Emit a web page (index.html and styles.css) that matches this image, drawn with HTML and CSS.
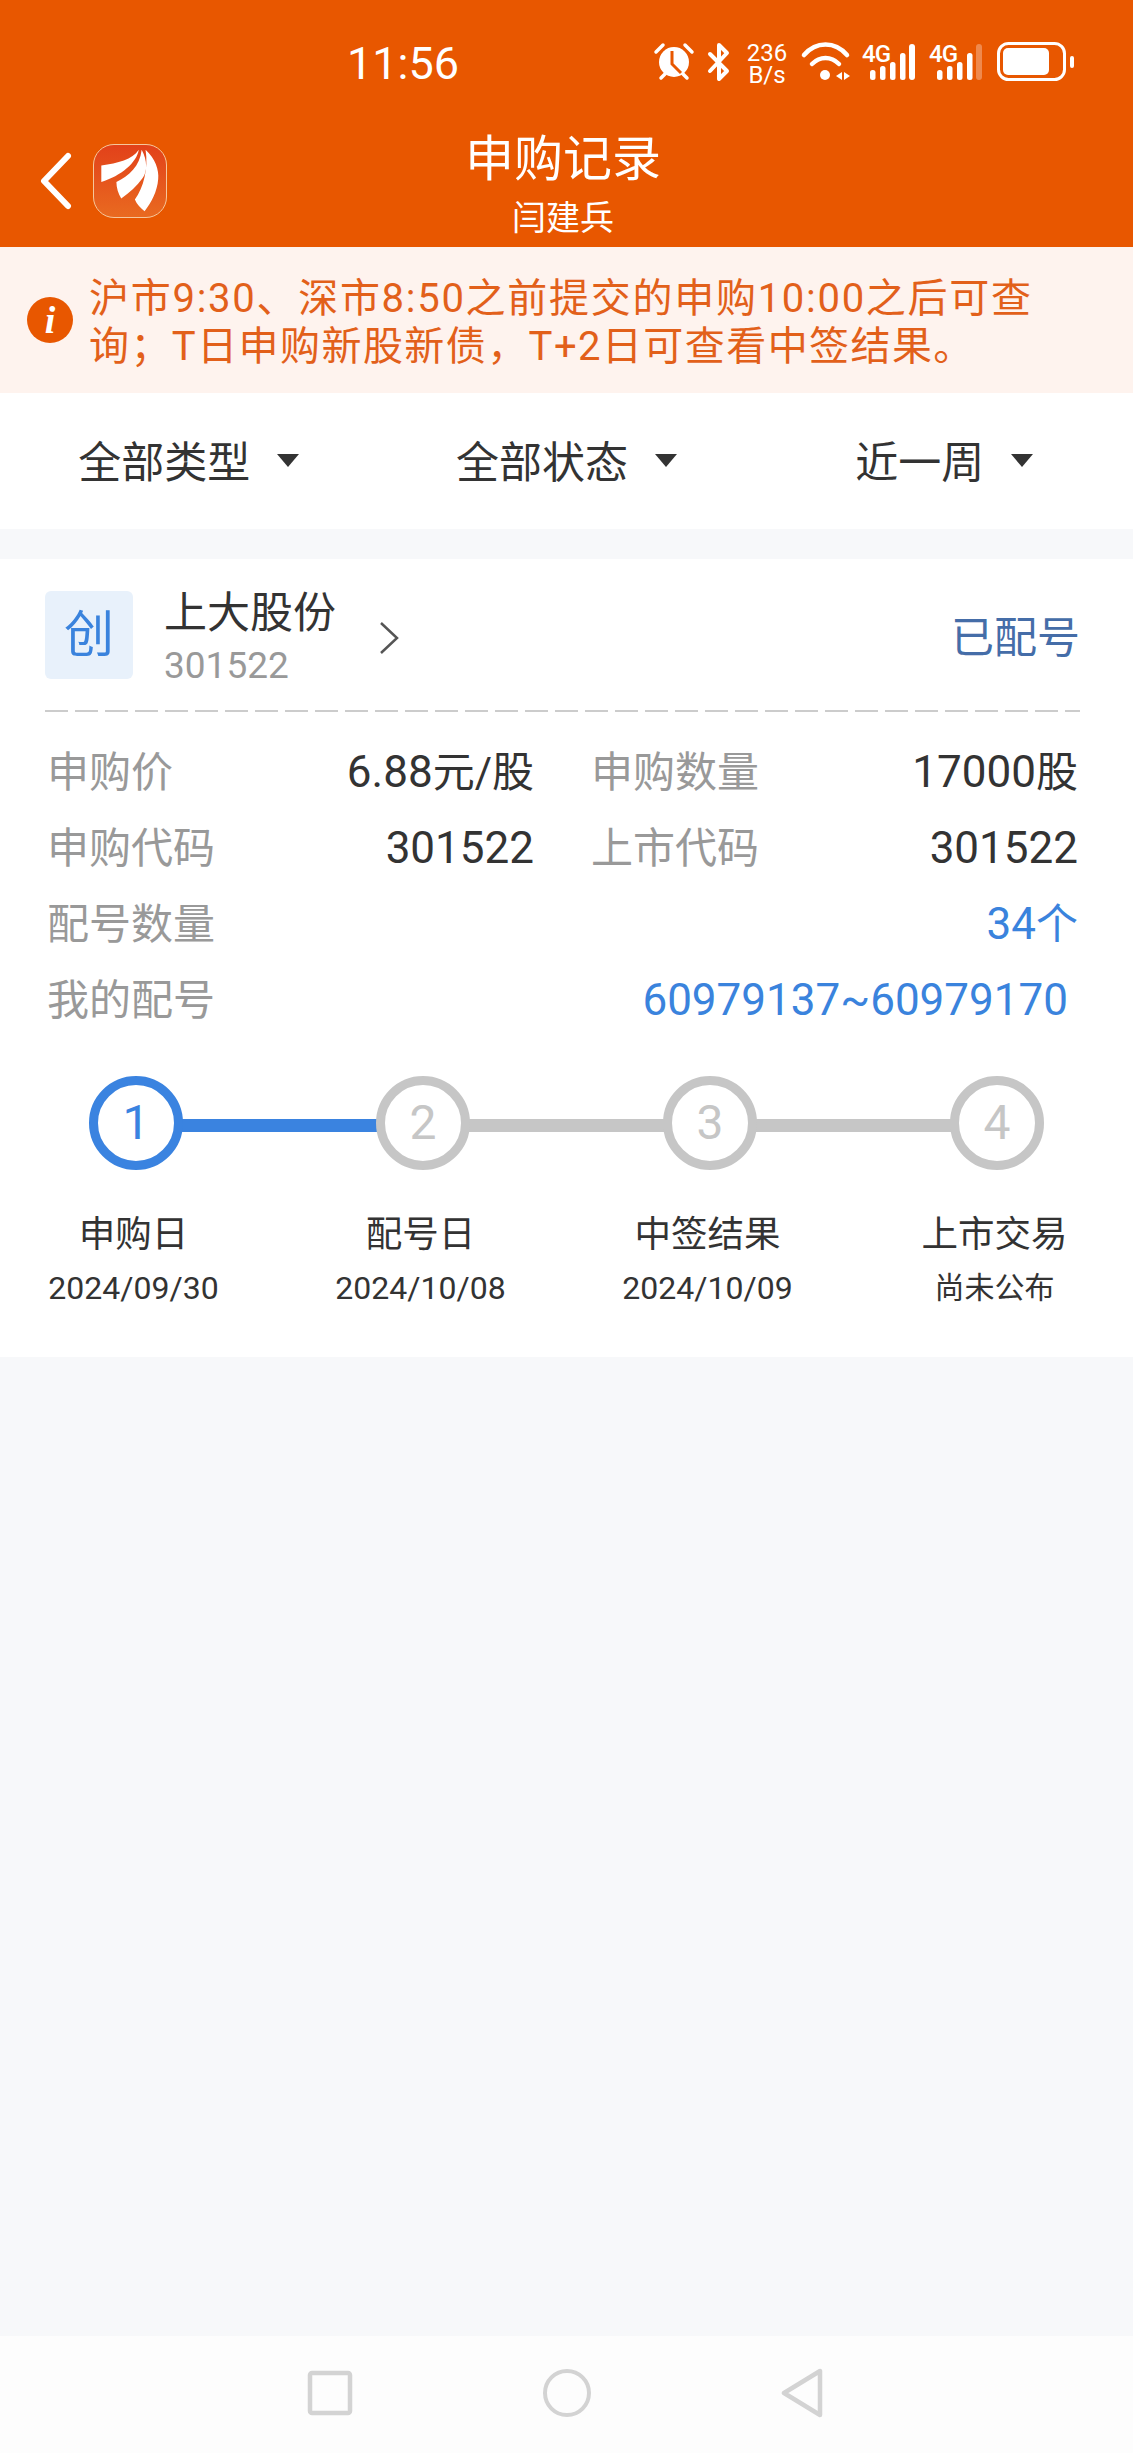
FILE: index.html
```html
<!DOCTYPE html>
<html>
  <head>
    <meta charset="utf-8">
    <title>申购记录</title>
    <link rel="stylesheet" href="styles.css">
  </head>
  <body>
    <div class="page">
      <header class="top">
        <div class="statusbar">
          <span class="time">11:56</span>
          <svg class="status-icons" viewBox="650 36 430 52" width="430" height="52">
            <!-- alarm -->
            <circle cx="674" cy="62" r="15" fill="#fff"/>
            <path d="M672 51v13l9 9" fill="none" stroke="#e85700" stroke-width="3"/>
            <path d="M656 52l7-7M692 52l-7-7M661 78l4-4M687 78l-4-4" stroke="#fff" stroke-width="3.5" stroke-linecap="round"/>
            <!-- bluetooth -->
            <path d="M710 54l17 17-8 8V45l8 8-17 18" fill="none" stroke="#fff" stroke-width="4" stroke-linejoin="round" stroke-linecap="round"/>
            <!-- speed -->
            <text class="st-text" x="767" y="61" text-anchor="middle">236</text>
            <text class="st-text" x="767" y="83" text-anchor="middle">B/s</text>
            <!-- wifi -->
            <path d="M804 55c12-14 31-14 43 0M812 64c8-8 19-8 27 0" fill="none" stroke="#fff" stroke-width="4.5" stroke-linecap="round"/>
            <circle cx="825" cy="75" r="5" fill="#fff"/>
            <path d="M842 72v8l-6-4zM844 72v8l6-4z" fill="#fff"/>
            <!-- sim 1 -->
            <text class="st-4g" x="862" y="62">4G</text>
            <rect x="870" y="70" width="5.500" height="10" rx="2.500" fill="#fff"/>
            <rect x="880" y="66" width="5.500" height="14" rx="2.500" fill="#fff"/>
            <rect x="890" y="62" width="5.500" height="18" rx="2.500" fill="#fff"/>
            <rect x="900" y="53" width="5.500" height="27" rx="2.500" fill="#fff"/>
            <rect x="909" y="44" width="6" height="36" rx="3" fill="#fff"/>
            <!-- sim 2 -->
            <text class="st-4g" x="929" y="62">4G</text>
            <rect x="937" y="70" width="5.500" height="10" rx="2.500" fill="#fff"/>
            <rect x="947" y="66" width="5.500" height="14" rx="2.500" fill="#fff"/>
            <rect x="957" y="62" width="5.500" height="18" rx="2.500" fill="#fff"/>
            <rect x="967" y="53" width="5.500" height="27" rx="2.500" fill="#fff"/>
            <rect x="976" y="44" width="6" height="36" rx="3" fill="#fff" fill-opacity=".3"/>
            <!-- battery -->
            <rect x="998.500" y="43.500" width="66" height="36" rx="10" fill="none" stroke="#fff" stroke-width="3"/>
            <rect x="1003" y="48" width="46" height="27" rx="5" fill="#fff"/>
            <rect x="1070" y="56" width="4" height="12" rx="2" fill="#fff"/>
          </svg>
        </div>
        <div class="navbar">
          <div class="nav-left">
            <svg class="back" viewBox="0 0 34 58" width="34" height="58">
              <path d="M29 4L5 29l24 25" fill="none" stroke="#fff" stroke-width="6" stroke-linecap="round" stroke-linejoin="round"/>
            </svg>
            <div class="logo">
              <svg viewBox="93 144 74 73" width="72" height="71">
                <path d="M100.500 165c17-2 32-6 38.500-16-2 13-18 27-38.500 33z" fill="#fff"/>
                <path d="M116 182c13-6 24-16 26-33 6 11 6 23 1 29-6 8-13 15-22 21-3-5-5-11-5-17z" fill="#fff"/>
                <path d="M135 200c9-12 14-32 11-51 10 9 14 21 13 30-1 13-7 24-14 33-4-3-8-7-10-12z" fill="#fff"/>
              </svg>
            </div>
          </div>
          <div class="nav-title">
            <div class="title">申购记录</div>
            <div class="subtitle">闫建兵</div>
          </div>
        </div>
      </header>

      <div class="notice">
        <span class="notice-icon">i</span>
        <p><span class="notice-first">沪市9:30、深市8:50之前提交的申购10:00之后可查</span><br>询；T日申购新股新债，T+2日可查看中签结果。</p>
      </div>

      <div class="filters">
        <div class="filter">全部类型<i class="caret"></i></div>
        <div class="filter">全部状态<i class="caret"></i></div>
        <div class="filter">近一周<i class="caret"></i></div>
      </div>

      <section class="card">
        <div class="card-head">
          <div class="badge">创</div>
          <div class="stock">
            <div class="stock-name">上大股份</div>
            <div class="stock-code">301522</div>
          </div>
          <svg class="chevron" viewBox="0 0 20 34" width="20" height="34">
            <path d="M2 2l16 15L2 32" fill="none" stroke="#555" stroke-width="2.500"/>
          </svg>
          <div class="stock-status">已配号</div>
        </div>
        <div class="dashes"></div>

        <div class="rows">
          <div class="row-pair">
            <div class="row"><span class="label">申购价</span><span class="value">6.88<span class="unit">元/股</span></span></div>
            <div class="row"><span class="label">申购数量</span><span class="value">17000<span class="unit">股</span></span></div>
          </div>
          <div class="row-pair">
            <div class="row"><span class="label">申购代码</span><span class="value">301522</span></div>
            <div class="row"><span class="label">上市代码</span><span class="value">301522</span></div>
          </div>
          <div class="row"><span class="label">配号数量</span><span class="value blue">34<span class="unit">个</span></span></div>
          <div class="row"><span class="label">我的配号</span><span class="value blue range">60979137~60979170</span></div>
        </div>

        <div class="steps">
          <div class="step done">
            <div class="step-num">1</div>
            <div class="step-name">申购日</div>
            <div class="step-date">2024/09/30</div>
          </div>
          <div class="step">
            <div class="step-num">2</div>
            <div class="step-name">配号日</div>
            <div class="step-date">2024/10/08</div>
          </div>
          <div class="step">
            <div class="step-num">3</div>
            <div class="step-name">中签结果</div>
            <div class="step-date">2024/10/09</div>
          </div>
          <div class="step">
            <div class="step-num">4</div>
            <div class="step-name">上市交易</div>
            <div class="step-date small">尚未公布</div>
          </div>
        </div>
      </section>

      <div class="spacer"></div>

      <footer class="sysnav">
        <svg viewBox="0 0 48 48" width="48" height="48"><rect x="4" y="4" width="40" height="40" rx="2" fill="none" stroke="#d3d3d3" stroke-width="4.500"/></svg>
        <svg viewBox="0 0 48 48" width="48" height="48"><circle cx="24" cy="24" r="22" fill="none" stroke="#d3d3d3" stroke-width="4"/></svg>
        <svg viewBox="0 0 44 50" width="44" height="50"><path d="M40 3v44L4 25z" fill="none" stroke="#d3d3d3" stroke-width="4.500" stroke-linejoin="round"/></svg>
      </footer>
    </div>
  </body>
</html>
```

FILE: styles.css
```css
* { box-sizing: border-box; }
html, body { margin: 0; padding: 0; }
body { font-family: Roboto, "Noto Sans CJK SC", sans-serif; background: #f7f8fa; color: #333; }

.page { width: 1133px; height: 2453px; display: flex; flex-direction: column; overflow: hidden; }

/* header */
.top { background: #e85700; color: #fff; height: 247px; }
.statusbar { height: 124px; display: flex; align-items: center; padding-left: 347px; position: relative; }
.time { font-size: 45px; line-height: 1; padding-top: 2px; }
.status-icons { margin-left: auto; margin-right: 53px; display: block; flex: none; }
.st-text { font-family: Roboto, sans-serif; font-size: 24px; fill: #fff; }
.st-4g { font-family: Roboto, sans-serif; font-size: 24px; font-weight: 500; fill: #fff; letter-spacing: -1px; }

.navbar { height: 123px; position: relative; padding: 6px 7px 0 0; text-align: center; }
.nav-left { position: absolute; left: 39px; top: 20px; display: flex; align-items: center; gap: 20px; }
.back { display: block; }
.logo { width: 74px; height: 74px; border-radius: 21px; border: 1px solid #f6c79c; background: linear-gradient(#e2411a, #e96a20); overflow: hidden; }
.logo svg { display: block; }
.title { font-size: 49px; line-height: 60px; }
.subtitle { font-size: 34px; line-height: 40px; margin-top: 8px; }

/* notice */
.notice { height: 146px; background: #fef3ee; display: flex; align-items: center; padding-left: 27px; color: #e2601a; }
.notice p { margin: 5px 0 0 16px; font-size: 40px; line-height: 48px; letter-spacing: 1.43px; white-space: nowrap; }
.notice-first { letter-spacing: 1.72px; }
.notice-icon { width: 46px; height: 46px; border-radius: 50%; background: #e85700; color: #fff; flex: none; text-align: center; font-family: "Liberation Serif", serif; font-weight: bold; font-style: italic; font-size: 38px; line-height: 46px; }

/* filters */
.filters { height: 136px; background: #fff; display: grid; grid-template-columns: repeat(3, 1fr); }
.filter { display: flex; align-items: center; justify-content: center; font-size: 43px; color: #333; padding-bottom: 4px; }
.caret { width: 0; height: 0; margin: 2px 0 0 27px; border-left: 11px solid transparent; border-right: 11px solid transparent; border-top: 13px solid #333; }

/* card */
.card { margin-top: 30px; height: 798px; background: #fff; }
.card-head { margin: 0 53px 0 45px; height: 151px; padding-top: 32px; display: flex; align-items: flex-start; }
.badge { width: 88px; height: 88px; border-radius: 6px; background: #e8f1fb; color: #3a83dd; font-size: 50px; line-height: 88px; text-align: center; flex: none; }
.stock { margin-left: 31px; margin-top: -6px; }
.stock-name { font-size: 43px; line-height: 56px; }
.stock-code { font-size: 37px; line-height: 44px; color: #999; margin-top: 3px; }
.chevron { margin: 30px 0 0 43px; display: block; }
.stock-status { margin: 19px 0 0 auto; font-size: 43px; line-height: 56px; color: #456da8; }
.dashes { margin: 0 53px 0 45px; height: 2px; background: repeating-linear-gradient(90deg, #ccc 0 23px, transparent 23px 30px); }

.rows { margin: 22px 55px 0 47px; }
.row-pair { display: grid; grid-template-columns: 1fr 1fr; column-gap: 57px; }
.row { display: flex; justify-content: space-between; align-items: baseline; height: 76px; line-height: 76px; font-size: 42px; white-space: nowrap; }
.label { color: #999; }
.value { color: #333; font-size: 44px; }
.unit { font-size: 42px; }
.blue { color: #3a83dd; }
.range { margin-right: 10px; }

.steps { display: flex; justify-content: space-between; padding: 0 36px; margin-top: 38px; }
.step { width: 200px; text-align: center; position: relative; color: #333; }
.step-num { width: 94px; height: 94px; margin: 0 auto; border-radius: 50%; border: 9px solid #c6c6c6; background: #fff; color: #c6c6c6; font-size: 48px; line-height: 76px; position: relative; z-index: 1; }
.step:not(:last-child)::after { content: ""; position: absolute; left: 50%; top: 43px; width: 287px; height: 13px; background: #c6c6c6; }
.step.done .step-num { border-color: #3a83e0; color: #3a83e0; }
.step.done::after { background: #3a83e0; }
.step-name { font-size: 36.500px; line-height: 48px; margin-top: 41px; padding-right: 5px; }
.step-date { font-size: 32px; line-height: 44px; margin-top: 7px; padding-right: 5px; }
.step-date.small { font-size: 30px; }

.spacer { flex: 1; }

/* system nav */
.sysnav { height: 117px; background: #fdfdfd; display: flex; align-items: center; padding-left: 306px; gap: 189px; padding-bottom: 4px; }
.sysnav svg { display: block; flex: none; }
```
